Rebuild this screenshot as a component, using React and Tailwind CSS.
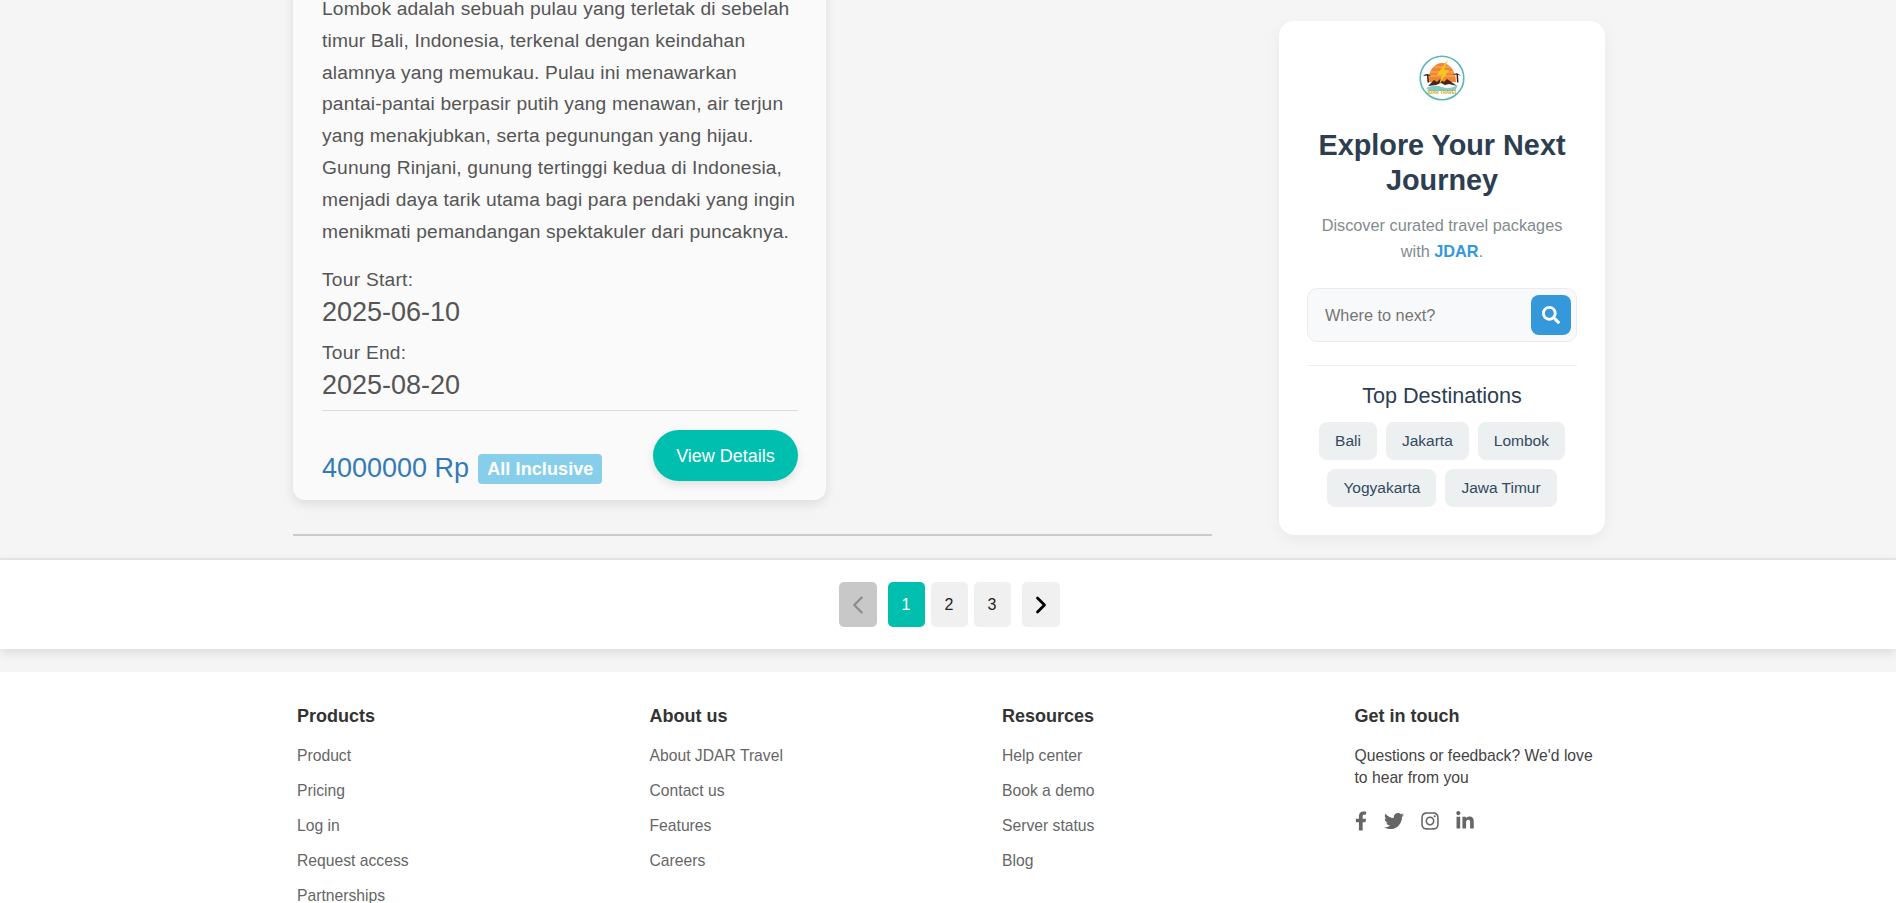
import React from 'react';
import { ChevronLeft, ChevronRight } from 'lucide-react';
import { FaFacebookF, FaTwitter, FaInstagram, FaLinkedinIn, FaSearch } from 'react-icons/fa';

const destinos = ['Bali', 'Jakarta', 'Lombok', 'Yogyakarta', 'Jawa Timur'];

const kolomFooter = [
    { judul: 'Products', link: ['Product', 'Pricing', 'Log in', 'Request access', 'Partnerships'] },
    { judul: 'About us', link: ['About JDAR Travel', 'Contact us', 'Features', 'Careers'] },
    { judul: 'Resources', link: ['Help center', 'Book a demo', 'Server status', 'Blog'] },
];

const Logo = () => (
    <svg width="46" height="46" viewBox="0 0 46 46">
        <circle cx="23" cy="23" r="21.8" fill="#fff" stroke="#5bb8b4" strokeWidth="1.6" />
        <path d="M9 27a14 19 0 0 1 28 0z" fill="#f0872e" />
        <path d="M15 12h16M11 17h24M10 21h26" stroke="#f9c88c" strokeWidth="0.7" />
        <path d="M7 33q8 -4 16 -1t16 -2l-3 6H11z" fill="#7fcfc8" />
        <path d="M9 31l6 -6 3 2 3 -3 4 3 3 -3 3 2 7 5-8 -2-4 1-4 -2-5 2z" fill="#4a2416" />
        <path d="M4 21q4 -4 8 0l-2.500 -0.500 0.500 7-1.500 0 -0.500 -7zM34 20q4 -4 8 1l-3 -1.500 0.500 8-1.500 0 -0.500 -8z" fill="#3a1c10" />
        <path d="M29 4L18 20h5l-3 10 10 -15h-5z" fill="#f7c31e" />
        <text x="23" y="39" textAnchor="middle" fontSize="4.5" fontWeight="700" fill="#c9a227" fontFamily="'Liberation Sans', sans-serif">JDAR TRAVEL</text>
    </svg>
);

const TourCard = () => (
    <div className="-mt-[40px] w-[533px] rounded-[12px] bg-[#fafafa] pb-[15px] pl-[29px] pr-[28px] pt-[33px] text-[#555] shadow-[0_4px_12px_rgba(0,0,0,0.1)]">
        <p className="whitespace-nowrap text-[19.2px] leading-[31.8px] tracking-[0.15px]">
            Lombok adalah sebuah pulau yang terletak di sebelah<br />
            timur Bali, Indonesia, terkenal dengan keindahan<br />
            alamnya yang memukau. Pulau ini menawarkan<br />
            pantai-pantai berpasir putih yang menawan, air terjun<br />
            yang menakjubkan, serta pegunungan yang hijau.<br />
            Gunung Rinjani, gunung tertinggi kedua di Indonesia,<br />
            menjadi daya tarik utama bagi para pendaki yang ingin<br />
            menikmati pemandangan spektakuler dari puncaknya.
        </p>
        <div className="mt-[19px] text-[19.2px] leading-[28px] tracking-[0.25px]">Tour Start:</div>
        <div className="mt-[1px] text-[27px] leading-[34px]">2025-06-10</div>
        <div className="mt-[10px] text-[19.2px] leading-[28px] tracking-[0.25px]">Tour End:</div>
        <div className="mt-[1px] text-[27px] leading-[34px]">2025-08-20</div>
        <div className="mt-[8px] flex items-start justify-between border-t border-[#ddd] pt-[19px]">
            <div className="mt-[21px] flex items-center gap-[9px]">
                <span className="text-[27px] leading-[34px] text-[#337ab7]">4000000 Rp</span>
                <span className="mt-[2px] rounded-[4px] bg-[#87ceeb] px-[9px] py-[3px] text-[18px] font-bold leading-[24px] tracking-[0.1px] text-white">All Inclusive</span>
            </div>
            <button className="h-[51px] w-[145px] rounded-full bg-[#00bfae] pt-[1px] text-[18px] text-white shadow-[0_4px_10px_rgba(0,0,0,0.1)]">View Details</button>
        </div>
    </div>
);

const Sidebar = () => (
    <aside className="ml-[67px] mt-[21px] h-[514px] w-[326px] rounded-[15px] bg-white px-[28px] pt-[34px] text-center shadow-[0_5px_15px_rgba(0,0,0,0.05)]">
        <div className="flex justify-center"><Logo /></div>
        <h2 className="mt-[27px] text-[28.8px] font-bold leading-[34.5px] text-[#2c3e50]">Explore Your Next Journey</h2>
        <p className="mx-auto mt-[16px] w-[250px] text-[16.3px] font-light leading-[25.6px] text-[#7f8c8d]">
            Discover curated travel packages with <span className="font-semibold text-[#3498db]">JDAR</span>.
        </p>
        <div className="mt-[24px] flex h-[54px] items-center justify-between rounded-[10px] border border-[#e9ecef] bg-[#f8f9fa] pl-[17px] pr-[5px]">
            <span className="text-[16.3px] text-[#757575]">Where to next?</span>
            <button className="flex h-[40px] w-[40px] items-center justify-center rounded-[8px] bg-[#3498db] text-white"><FaSearch size={18} /></button>
        </div>
        <div className="mt-[23px] border-t border-[#ecf0f1] pt-[15px]">
            <h3 className="text-[21.6px] leading-[30px] text-[#2c3e50]">Top Destinations</h3>
            <div className="mt-[11px] flex flex-wrap justify-center gap-x-[9px] gap-y-[9px]">
                {destinos.map((d) => (
                    <span key={d} className="rounded-[8px] bg-[#ecf0f1] px-[16px] py-[9px] text-[15.5px] leading-[20px] text-[#34495e]">{d}</span>
                ))}
            </div>
        </div>
    </aside>
);

const Pagination = () => (
    <div className="mt-[22px] flex h-[91px] items-center justify-center border-t-2 border-[#e4e4e4] bg-white pl-[2px] shadow-[0_4px_10px_rgba(0,0,0,0.1)]">
        <button className="mr-[11px] flex h-[45px] w-[38px] items-center justify-center rounded-[5px] bg-[#c8c8c8] text-[#8c8c8c]"><ChevronLeft size={30} strokeWidth={1.8} /></button>
        <div className="flex gap-[6px]">
            <button className="h-[45px] w-[37px] rounded-[5px] bg-[#00bfae] text-[16px] text-white">1</button>
            <button className="h-[45px] w-[37px] rounded-[5px] bg-[#f0f0f0] text-[16px] text-[#222]">2</button>
            <button className="h-[45px] w-[37px] rounded-[5px] bg-[#f0f0f0] text-[16px] text-[#222]">3</button>
        </div>
        <button className="ml-[11px] flex h-[45px] w-[38px] items-center justify-center rounded-[5px] bg-[#f0f0f0] text-black"><ChevronRight size={28} strokeWidth={2.4} /></button>
    </div>
);

const Footer = () => (
    <footer className="mt-[23px] flex h-[300px] bg-white pl-[297px] pt-[32px]">
        {kolomFooter.map((k) => (
            <div key={k.judul} className="w-[352.5px]">
                <h4 className="text-[18px] font-bold leading-[24px] text-[#333]">{k.judul}</h4>
                <ul className="mt-[17px]">
                    {k.link.map((l) => (
                        <li key={l} className="mb-[14px] text-[15.7px] leading-[21px] text-[#666]">{l}</li>
                    ))}
                </ul>
            </div>
        ))}
        <div className="w-[250px]">
            <h4 className="text-[18px] font-bold leading-[24px] text-[#333]">Get in touch</h4>
            <p className="mt-[17px] text-[15.7px] leading-[22px] text-[#444]">Questions or feedback? We'd love to hear from you</p>
            <div className="mt-[22px] flex items-center gap-[17px] text-[#666]">
                <FaFacebookF className="h-[20px] w-[12px]" />
                <FaTwitter className="h-[20px] w-[20px]" />
                <FaInstagram className="h-[20px] w-[18px]" />
                <FaLinkedinIn className="h-[20px] w-[18px]" />
            </div>
        </div>
    </footer>
);

const App = () => {
    return (
        <div className="h-[903px] overflow-hidden bg-[#f5f5f5] font-['Liberation_Sans',Arial,sans-serif]">
            <div className="flex items-start pl-[293px]">
                <div className="w-[919px]">
                    <TourCard />
                    <div className="mt-[34px] h-[2px] bg-[#ccc]"></div>
                </div>
                <Sidebar />
            </div>
            <Pagination />
            <Footer />
        </div>
    );
};

export default App;
